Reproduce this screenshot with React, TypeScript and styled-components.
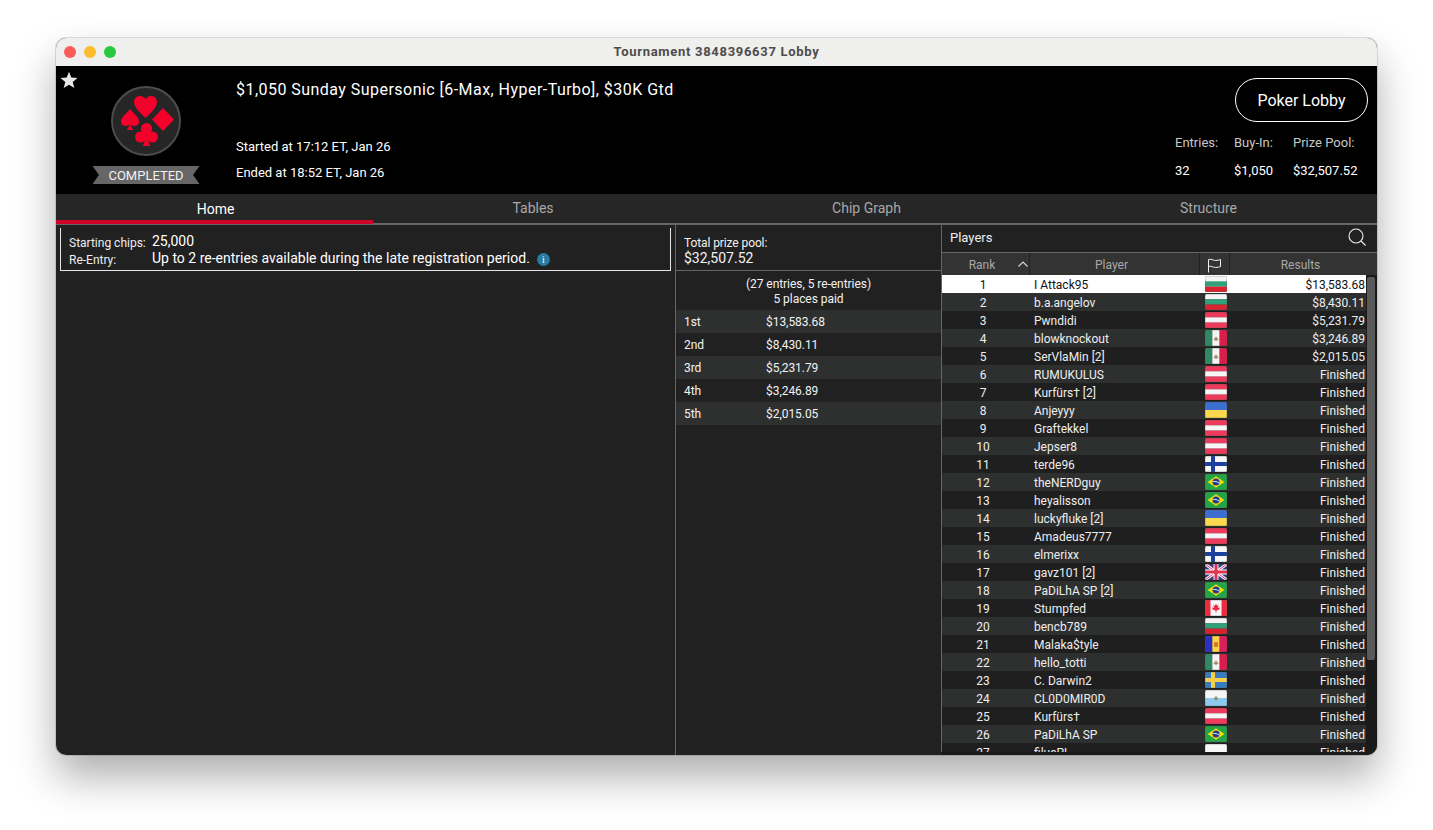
import React from "react";
import styled, { createGlobalStyle } from "styled-components";

const GlobalStyle = createGlobalStyle`
  html, body {
    margin: 0;
    padding: 0;
    background: #ffffff;
    font-family: Roboto, "Liberation Sans", sans-serif;
    overflow: hidden;
  }
`;

const Page = styled.div`
  width: 1433px;
  height: 830px;
  padding-top: 38px;
  box-sizing: border-box;
  display: flex;
  justify-content: center;
  align-items: flex-start;
`;

const Window = styled.div`
  width: 1321px;
  height: 717px;
  border-radius: 10px;
  overflow: hidden;
  display: flex;
  flex-direction: column;
  background: #212121;
`;

const WindowFrame = styled.div`
  border-radius: 10px;
  box-shadow: 0 22px 42px rgba(0, 0, 0, 0.32), 0 0 0 1px rgba(0, 0, 0, 0.12);
`;

const TitleBar = styled.div`
  position: relative;
  height: 28px;
  flex: none;
  box-sizing: border-box;
  padding-bottom: 2px;
  background: #efefed;
  display: flex;
  align-items: center;
  justify-content: center;
  color: #4c4c4c;
  font-size: 13px;
  font-weight: 700;
  letter-spacing: 0.7px;
`;

const Lights = styled.div`
  position: absolute;
  left: 8px;
  top: 8px;
  display: flex;
  gap: 8px;
`;

const Light = styled.span<{ $color: string }>`
  width: 12px;
  height: 12px;
  border-radius: 50%;
  background: ${(p) => p.$color};
`;

const Header = styled.div`
  position: relative;
  height: 128px;
  flex: none;
  background: #000;
  color: #fff;
  display: flex;
`;

const FavStar = styled.svg`
  position: absolute;
  left: 4px;
  top: 5px;
`;

const LogoColumn = styled.div`
  width: 180px;
  flex: none;
  display: flex;
  flex-direction: column;
  align-items: center;
  padding-top: 20px;
  box-sizing: border-box;
`;

const Ribbon = styled.div`
  margin-top: 10px;
  width: 107px;
  height: 18px;
  background: #666666;
  clip-path: polygon(0 0, 100% 0, 94% 50%, 100% 100%, 0 100%, 6% 50%);
  color: #f2f2f2;
  font-size: 13px;
  line-height: 19px;
  text-align: center;
`;

const InfoColumn = styled.div`
  flex: 1;
  padding-top: 14px;
`;

const EventTitle = styled.div`
  font-size: 16px;
  font-weight: 400;
  letter-spacing: 0.46px;
  line-height: 20px;
  height: 54px;
`;

const TimeLine = styled.div`
  font-size: 13px;
  line-height: 26px;
`;

const SideColumn = styled.div`
  flex: none;
  width: 202px;
  padding: 12px 9px 0 0;
  box-sizing: border-box;
  display: flex;
  flex-direction: column;
  align-items: flex-end;
`;

const LobbyButton = styled.div`
  width: 133px;
  height: 44px;
  box-sizing: border-box;
  border: 1px solid #fff;
  border-radius: 22px;
  display: flex;
  align-items: center;
  justify-content: center;
  font-size: 16px;
`;

const Stats = styled.div`
  margin-top: 12px;
  align-self: flex-start;
  display: grid;
  grid-template-columns: 59px 59px auto;
  font-size: 13px;
  line-height: 18px;
  row-gap: 10px;
`;

const StatLabel = styled.div`
  color: #c8c8c8;
`;

const StatValue = styled.div`
  color: #ffffff;
`;

const Tabs = styled.div`
  height: 31px;
  flex: none;
  display: grid;
  grid-template-columns: 317px 320px 347px 337px;
  background: #262626;
  border-bottom: 2px solid #666;
  box-sizing: border-box;
`;

const Tab = styled.div<{ $active?: boolean }>`
  margin-bottom: ${(p) => (p.$active ? "-1px" : "0")};
  border-bottom: ${(p) => (p.$active ? "4px solid #d0042a" : "none")};
  color: ${(p) => (p.$active ? "#ffffff" : "#a8a8a8")};
  display: flex;
  align-items: center;
  justify-content: center;
  font-size: 14px;
  padding-top: ${(p) => (p.$active ? "4px" : "0")};
  padding-left: ${(p) => (p.$active ? "2px" : "0")};
  padding-bottom: ${(p) => (p.$active ? "0" : "2px")};
`;

const Body = styled.div`
  flex: 1;
  min-height: 0;
  display: grid;
  grid-template-columns: 620px 266px 435px;
`;

const HomePane = styled.div`
  border-right: 1px solid #666;
  padding: 3px 4px 0;
`;

const RulesBox = styled.div`
  height: 43px;
  box-sizing: border-box;
  border: 1px solid #e6e6e6;
  border-top: none;
  padding: 5px 0 0 8px;
  color: #fff;
  display: grid;
  grid-template-columns: 83px 1fr;
  align-items: center;
  grid-auto-rows: 17px;
`;

const RuleLabel = styled.div`
  font-size: 12px;
  color: #eeeeee;
  padding-top: 2px;
`;

const RuleValue = styled.div`
  font-size: 14px;
  display: flex;
  align-items: center;
  gap: 7px;
  padding-bottom: 2px;
`;

const InfoDot = styled.span`
  width: 13px;
  height: 13px;
  border-radius: 50%;
  background: #2a7ca3;
  color: #fff;
  font-size: 10px;
  line-height: 13px;
  text-align: center;
  font-family: "Liberation Serif", serif;
  margin-top: 3px;
`;

const PrizePane = styled.div`
  height: 527px;
  border-right: 1px solid #666;
  color: #f2f2f2;
  letter-spacing: -0.05px;
`;

const PrizeTotal = styled.div`
  height: 46px;
  padding: 11px 0 0 8px;
  box-sizing: border-box;
  border-bottom: 1px solid #666;
  font-size: 12px;
  line-height: 15px;
  letter-spacing: -0.1px;
`;

const PrizeAmount = styled.div`
  font-size: 14px;
  line-height: 15px;
  letter-spacing: 0;
`;

const PrizeNote = styled.div`
  height: 39px;
  padding-top: 6px;
  box-sizing: border-box;
  text-align: center;
  font-size: 12px;
  line-height: 15px;
`;

const PayoutRow = styled.div<{ $odd: boolean }>`
  height: 23px;
  display: grid;
  grid-template-columns: 82px 1fr;
  align-items: center;
  padding-left: 8px;
  font-size: 12px;
  background: ${(p) => (p.$odd ? "#2e302f" : "#212121")};
`;

const PlayersPane = styled.div`
  display: flex;
  flex-direction: column;
  min-height: 0;
  background: #1a1a1a;
`;

const PlayersBar = styled.div`
  height: 28px;
  flex: none;
  box-sizing: border-box;
  background: #212121;
  border-bottom: 1px solid #666;
  display: flex;
  align-items: center;
  justify-content: space-between;
  padding: 0 10px 3px 8px;
  color: #eeeeee;
  font-size: 13px;
`;

const ColumnsHead = styled.div`
  height: 22px;
  flex: none;
  display: grid;
  grid-template-columns: 88px 170px 30px 1fr;
  background: #333333;
  color: #a8a8a8;
  font-size: 12px;
`;

const HeadCell = styled.div<{ $shift?: number }>`
  position: relative;
  display: flex;
  align-items: center;
  justify-content: center;
  padding-right: ${(p) => p.$shift ?? 0}px;
  padding-top: 2px;
  border-right: 1px solid #222;
  &:last-child {
    border-right: none;
  }
`;

const SortCaret = styled.svg`
  position: absolute;
  right: 1px;
  top: 8px;
`;

const TableArea = styled.div`
  height: 477px;
  flex: none;
  display: flex;
`;

const Rows = styled.div`
  width: 424px;
  overflow: hidden;
  flex: none;
`;

const Row = styled.div<{ $selected: boolean; $odd: boolean }>`
  height: 18px;
  display: grid;
  grid-template-columns: 88px 170px 30px 1fr;
  align-items: center;
  font-size: 12px;
  color: ${(p) => (p.$selected ? "#111111" : "#eeeeee")};
  background: ${(p) =>
    p.$selected ? "#ffffff" : p.$odd ? "#1f1f1f" : "#2e302f"};
`;

const RankCell = styled.div`
  text-align: center;
  padding: 2px 6px 0 0;
`;

const NameCell = styled.div`
  padding: 2px 0 0 4px;
`;

const FlagCell = styled.div`
  padding: 1px 0 0 5px;
  height: 18px;
  box-sizing: border-box;
`;

const ResultCell = styled.div`
  text-align: right;
  padding: 2px 1px 0 0;
`;

const FlagSvg = styled.svg`
  display: block;
`;

const ScrollTrack = styled.div`
  flex: 1;
  padding: 2px 2px 0 1px;
`;

const ScrollThumb = styled.div`
  height: 383px;
  width: 8px;
  border-radius: 2px;
  background: #5a5a5a;
`;

type FlagCode = "bg" | "at" | "mx" | "ua" | "fi" | "br" | "gb" | "ca" | "ad" | "se" | "sm" | "pl";

const Flag = ({ code }: { code: FlagCode }) => {
  const stripes = (a: string, b: string, c: string) => (
    <>
      <rect width="22" height="5.4" fill={a} />
      <rect y="5.3" width="22" height="5.4" fill={b} />
      <rect y="10.6" width="22" height="5.4" fill={c} />
    </>
  );
  const vert = (a: string, b: string, c: string) => (
    <>
      <rect width="7.4" height="16" fill={a} />
      <rect x="7.3" width="7.4" height="16" fill={b} />
      <rect x="14.6" width="7.4" height="16" fill={c} />
    </>
  );
  let art: React.ReactNode = null;
  if (code === "bg") art = stripes("#f4f4f4", "#2fa27a", "#d9232e");
  if (code === "at") art = stripes("#ee3a5c", "#f6f6f6", "#ee3a5c");
  if (code === "mx")
    art = (
      <>
        {vert("#2f8a63", "#f4f4f4", "#dc1c4b")}
        <path d="M8.5 9.5 L11 6.5 L13.5 9.5 L11 11 Z" fill="#a98d63" />
      </>
    );
  if (code === "ua")
    art = (
      <>
        <rect width="22" height="8" fill="#3b6fd0" />
        <rect y="8" width="22" height="8" fill="#fbd84e" />
      </>
    );
  if (code === "fi")
    art = (
      <>
        <rect width="22" height="16" fill="#f7f7f7" />
        <rect x="6" width="4" height="16" fill="#1f3f9e" />
        <rect y="6" width="22" height="4" fill="#1f3f9e" />
      </>
    );
  if (code === "se")
    art = (
      <>
        <rect width="22" height="16" fill="#3a7dbd" />
        <rect x="6" width="4" height="16" fill="#f6d04a" />
        <rect y="6" width="22" height="4" fill="#f6d04a" />
      </>
    );
  if (code === "br")
    art = (
      <>
        <rect width="22" height="16" fill="#22a447" />
        <path d="M11 2.2 L19.5 8 L11 13.8 L2.5 8 Z" fill="#f5d90a" />
        <circle cx="11" cy="8" r="3.5" fill="#1f3f8f" />
        <path d="M7.6 7.4 Q11 6.8 14.4 9" stroke="#fff" strokeWidth="0.8" fill="none" />
      </>
    );
  if (code === "gb")
    art = (
      <>
        <rect width="22" height="16" fill="#2b3a8f" />
        <path d="M0 0 L22 16 M22 0 L0 16" stroke="#fff" strokeWidth="3" />
        <path d="M0 0 L22 16 M22 0 L0 16" stroke="#e0314f" strokeWidth="1" />
        <path d="M11 0 V16 M0 8 H22" stroke="#fff" strokeWidth="5" />
        <path d="M11 0 V16 M0 8 H22" stroke="#e0314f" strokeWidth="3" />
      </>
    );
  if (code === "ca")
    art = (
      <>
        <rect width="22" height="16" fill="#f7f7f7" />
        <rect width="5.5" height="16" fill="#ee2b3f" />
        <rect x="16.5" width="5.5" height="16" fill="#ee2b3f" />
        <path d="M11 3.5 L12 5.8 L13.6 5.2 L13 8 L15 7.6 L14.4 9.6 L11.4 10.6 V12.5 H10.6 V10.6 L7.6 9.6 L7 7.6 L9 8 L8.4 5.2 L10 5.8 Z" fill="#ee2b3f" />
      </>
    );
  if (code === "ad")
    art = (
      <>
        {vert("#2b2fc4", "#fbd34a", "#dc1c5c")}
        <rect x="9" y="6" width="4" height="5" rx="1" fill="#d9772a" />
      </>
    );
  if (code === "sm")
    art = (
      <>
        <rect width="22" height="8" fill="#f6f6f6" />
        <rect y="8" width="22" height="8" fill="#8fcbf0" />
        <path d="M8.5 9 L11 5.8 L13.5 9 L11 10.5 Z" fill="#8c9a7a" />
      </>
    );
  if (code === "pl")
    art = (
      <>
        <rect width="22" height="8" fill="#f7f7f7" />
        <rect y="8" width="22" height="8" fill="#e0314f" />
      </>
    );
  return (
    <FlagSvg width="22" height="16" viewBox="0 0 22 16">
      <defs>
        <clipPath id={`flag-${code}`}>
          <rect width="22" height="16" rx="1.5" />
        </clipPath>
      </defs>
      <g clipPath={`url(#flag-${code})`}>{art}</g>
      <rect x="0.25" y="0.25" width="21.5" height="15.5" rx="1.5" fill="none" stroke="rgba(90,90,90,0.55)" strokeWidth="0.5" />
    </FlagSvg>
  );
};

const SuitsLogo = () => (
  <svg width="70" height="70" viewBox="0 0 70 70">
    <circle cx="35" cy="35" r="34" fill="#262626" stroke="#4d4d4d" strokeWidth="2" />
    <g fill="#f5002b">
      {/* heart */}
      <path d="M34.5 32 C29 26.5 23 21.5 23 16 C23 12 26 10 29 10 C31.5 10 33.5 11.5 34.5 13.5 C35.5 11.5 37.5 10 40 10 C43 10 46 12 46 16 C46 21.5 40 26.5 34.5 32 Z" />
      {/* spade */}
      <path d="M19 23 C15.5 27.5 10 31 10 35.5 C10 38.5 12.3 40 14.5 40 C16 40 17.3 39.3 18.2 38.2 C18 40.5 17 42.5 15.5 44 H22.5 C21 42.5 20 40.5 19.8 38.2 C20.7 39.3 22 40 23.5 40 C25.7 40 28 38.5 28 35.5 C28 31 22.5 27.5 19 23 Z" />
      {/* diamond */}
      <path d="M52 22 L63 33.5 L52 45 L41 33.5 Z" />
      {/* club */}
      <circle cx="35.5" cy="42.5" r="5.6" />
      <circle cx="29.6" cy="51" r="5.6" />
      <circle cx="41.4" cy="51" r="5.6" />
      <path d="M34.6 46 H36.4 C36.4 52 37 56.5 39.5 60 H31.5 C34 56.5 34.6 52 34.6 46 Z" />
    </g>
  </svg>
);

const payouts = [
  ["1st", "$13,583.68"],
  ["2nd", "$8,430.11"],
  ["3rd", "$5,231.79"],
  ["4th", "$3,246.89"],
  ["5th", "$2,015.05"],
];

const players: [string, FlagCode, string][] = [
  ["I Attack95", "bg", "$13,583.68"],
  ["b.a.angelov", "bg", "$8,430.11"],
  ["Pwndidi", "at", "$5,231.79"],
  ["blowknockout", "mx", "$3,246.89"],
  ["SerVlaMin [2]", "mx", "$2,015.05"],
  ["RUMUKULUS", "at", "Finished"],
  ["Kurfürs† [2]", "at", "Finished"],
  ["Anjeyyy", "ua", "Finished"],
  ["Graftekkel", "at", "Finished"],
  ["Jepser8", "at", "Finished"],
  ["terde96", "fi", "Finished"],
  ["theNERDguy", "br", "Finished"],
  ["heyalisson", "br", "Finished"],
  ["luckyfluke [2]", "ua", "Finished"],
  ["Amadeus7777", "at", "Finished"],
  ["elmerixx", "fi", "Finished"],
  ["gavz101 [2]", "gb", "Finished"],
  ["PaDiLhA SP [2]", "br", "Finished"],
  ["Stumpfed", "ca", "Finished"],
  ["bencb789", "bg", "Finished"],
  ["Malaka$tyle", "ad", "Finished"],
  ["hello_totti", "mx", "Finished"],
  ["C. Darwin2", "se", "Finished"],
  ["CL0D0MIR0D", "sm", "Finished"],
  ["Kurfürs†", "at", "Finished"],
  ["PaDiLhA SP", "br", "Finished"],
  ["filusPL", "pl", "Finished"],
];

const App = () => {
  return (
    <Page>
      <GlobalStyle />
      <WindowFrame>
        <Window>
          <TitleBar>
            <Lights>
              <Light $color="#fc5c57" />
              <Light $color="#fdbc2e" />
              <Light $color="#29c940" />
            </Lights>
            Tournament 3848396637 Lobby
          </TitleBar>

          <Header>
            <FavStar width="18" height="18" viewBox="0 0 18 18">
              <path d="M9 0.8 L11.3 6.6 L17.5 7 L12.7 11 L14.3 17 L9 13.7 L3.7 17 L5.3 11 L0.5 7 L6.7 6.6 Z" fill="#e8e8e8" />
            </FavStar>
            <LogoColumn>
              <SuitsLogo />
              <Ribbon>COMPLETED</Ribbon>
            </LogoColumn>
            <InfoColumn>
              <EventTitle>$1,050 Sunday Supersonic [6-Max, Hyper-Turbo], $30K Gtd</EventTitle>
              <TimeLine>Started at 17:12 ET, Jan 26</TimeLine>
              <TimeLine>Ended at 18:52 ET, Jan 26</TimeLine>
            </InfoColumn>
            <SideColumn>
              <LobbyButton>Poker Lobby</LobbyButton>
              <Stats>
                <StatLabel>Entries:</StatLabel>
                <StatLabel>Buy-In:</StatLabel>
                <StatLabel>Prize Pool:</StatLabel>
                <StatValue>32</StatValue>
                <StatValue>$1,050</StatValue>
                <StatValue>$32,507.52</StatValue>
              </Stats>
            </SideColumn>
          </Header>

          <Tabs>
            <Tab $active>Home</Tab>
            <Tab>Tables</Tab>
            <Tab>Chip Graph</Tab>
            <Tab>Structure</Tab>
          </Tabs>

          <Body>
            <HomePane>
              <RulesBox>
                <RuleLabel>Starting chips:</RuleLabel>
                <RuleValue>25,000</RuleValue>
                <RuleLabel>Re-Entry:</RuleLabel>
                <RuleValue>
                  Up to 2 re-entries available during the late registration period.
                  <InfoDot>i</InfoDot>
                </RuleValue>
              </RulesBox>
            </HomePane>

            <PrizePane>
              <PrizeTotal>
                Total prize pool:
                <PrizeAmount>$32,507.52</PrizeAmount>
              </PrizeTotal>
              <PrizeNote>
                (27 entries, 5 re-entries)
                <br />5 places paid
              </PrizeNote>
              {payouts.map(([place, amount], i) => (
                <PayoutRow key={place} $odd={i % 2 === 0}>
                  <span>{place}</span>
                  <span>{amount}</span>
                </PayoutRow>
              ))}
            </PrizePane>

            <PlayersPane>
              <PlayersBar>
                Players
                <svg width="20" height="20" viewBox="0 0 20 20" fill="none" stroke="#f0f0f0" strokeWidth="1.1">
                  <circle cx="9" cy="9" r="7" />
                  <path d="M14 14 L18.5 18.5" />
                </svg>
              </PlayersBar>
              <ColumnsHead>
                <HeadCell $shift={7}>
                  Rank
                  <SortCaret width="10" height="6" viewBox="0 0 10 6" fill="none" stroke="#d8d8d8" strokeWidth="1.1">
                    <path d="M0.5 5.5 L5 1 L9.5 5.5" />
                  </SortCaret>
                </HeadCell>
                <HeadCell $shift={6}>Player</HeadCell>
                <HeadCell>
                  <svg width="15" height="15" viewBox="0 0 15 15" fill="none" stroke="#f0f0f0" strokeWidth="1">
                    <path d="M1.5 14.5 V1.5 C4.5 0.5 6 2.5 8.5 2.5 C10.5 2.5 12 2 13.5 1.5 V8.5 C12 9 10.5 9.5 8.5 9.5 C6 9.5 4.5 7.5 1.5 8.5" />
                  </svg>
                </HeadCell>
                <HeadCell $shift={6}>Results</HeadCell>
              </ColumnsHead>
              <TableArea>
                <Rows>
                  {players.map(([name, flag, result], i) => (
                    <Row key={name} $selected={i === 0} $odd={i % 2 === 0}>
                      <RankCell>{i + 1}</RankCell>
                      <NameCell>{name}</NameCell>
                      <FlagCell>
                        <Flag code={flag} />
                      </FlagCell>
                      <ResultCell>{result}</ResultCell>
                    </Row>
                  ))}
                </Rows>
                <ScrollTrack>
                  <ScrollThumb />
                </ScrollTrack>
              </TableArea>
            </PlayersPane>
          </Body>
        </Window>
      </WindowFrame>
    </Page>
  );
};

export default App;
